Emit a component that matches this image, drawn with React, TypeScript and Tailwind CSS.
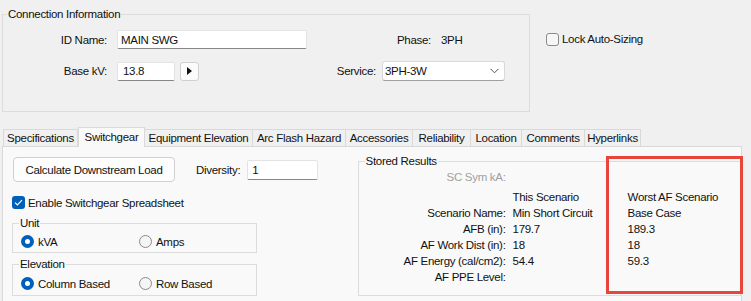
import React from "react";

function Box({
  title,
  titleBg,
  className,
  children,
}: {
  title: string;
  titleBg: string;
  className: string;
  children?: React.ReactNode;
}) {
  return (
    <div className={"border border-[#dcdcdc] " + className}>
      <div className={"-mt-[9px] w-fit px-[1px] leading-[16px] " + titleBg}>{title}</div>
      {children}
    </div>
  );
}

function Radio({ checked }: { checked?: boolean }) {
  return checked ? (
    <span className="flex h-[13px] w-[13px] shrink-0 items-center justify-center rounded-full bg-[#005fb8]">
      <span className="h-[5px] w-[5px] rounded-full bg-white" />
    </span>
  ) : (
    <span className="h-[13px] w-[13px] shrink-0 rounded-full border border-[#8a8a8a] bg-[#f5f5f5]" />
  );
}

const tabs: { name: string; w: string; active?: boolean }[] = [
  { name: "Specifications", w: "w-[75px]" },
  { name: "Switchgear", w: "w-[67px]", active: true },
  { name: "Equipment Elevation", w: "w-[108px]" },
  { name: "Arc Flash Hazard", w: "w-[93px]" },
  { name: "Accessories", w: "w-[67px]" },
  { name: "Reliability", w: "w-[58px]" },
  { name: "Location", w: "w-[51px]" },
  { name: "Comments", w: "w-[63px]" },
  { name: "Hyperlinks", w: "w-[56px]" },
];

const rows: [string, string, string][] = [
  ["Scenario Name:", "Min Short Circuit", "Base Case"],
  ["AFB (in):", "179.7", "189.3"],
  ["AF Work Dist (in):", "18", "18"],
  ["AF Energy (cal/cm2):", "54.4", "59.3"],
  ["AF PPE Level:", "", ""],
];

export default function App() {
  return (
    <div className="relative h-[301px] w-[751px] overflow-hidden bg-[#f0f0f0] font-['Liberation_Sans',Arial,sans-serif] text-[11.5px] leading-[16px] tracking-[-0.3px] text-[#111]">
      {/* Top section */}
      <div className="flex h-[127px] items-start pl-[2px] pt-[14px]">
        <Box title="Connection Information" titleBg="bg-[#f0f0f0] ml-[4px]" className="h-[98px] w-[528px]">
          <div className="mt-[8px] flex h-[19px] items-center">
            <div className="w-[104px] text-right">ID Name:</div>
            <div className="ml-[10px] flex h-[19px] w-[190px] items-center rounded-[2px] border border-[#e3e3e3] border-b-[#868686] bg-white pl-[3px]">
              MAIN SWG
            </div>
            <div className="w-[124px] text-right">Phase:</div>
            <div className="ml-[10px]">3PH</div>
          </div>
          <div className="mt-[12px] flex h-[20px] items-center">
            <div className="w-[104px] text-right">Base kV:</div>
            <div className="ml-[10px] flex h-[19px] w-[58px] items-center rounded-[2px] border border-[#e3e3e3] border-b-[#868686] bg-white pl-[5px]">
              13.8
            </div>
            <div className="ml-[5px] flex h-[19px] w-[19px] items-center justify-center rounded-[3px] border border-[#d0d0d0] bg-[#fbfbfb]">
              <svg width="5" height="8" viewBox="0 0 5 8">
                <polygon points="0,0 5,4 0,8" fill="#111" />
              </svg>
            </div>
            <div className="w-[177px] text-right">Service:</div>
            <div className="ml-[6px] flex h-[20px] w-[123px] items-center justify-between rounded-[3px] border border-[#d9d9d9] border-b-[#a0a0a0] bg-white pl-[2px] pr-[5px]">
              <span>3PH-3W</span>
              <svg width="9" height="6" viewBox="0 0 9 6">
                <path d="M0.5 0.8 L4.5 4.8 L8.5 0.8" fill="none" stroke="#555" strokeWidth="1" />
              </svg>
            </div>
          </div>
        </Box>
        <div className="ml-[16px] mt-[18px] flex items-center">
          <span className="h-[13px] w-[13px] rounded-[3px] border border-[#8a8a8a] bg-[#f6f6f6]" />
          <span className="ml-[3px] leading-[14px]">Lock Auto-Sizing</span>
        </div>
      </div>

      {/* Tab strip */}
      <div className="relative z-10 flex h-[19px] items-end pl-[3px]">
        {tabs.map((t, i) =>
          t.active ? (
            <div
              key={t.name}
              className={
                "-mb-[1px] flex h-[20px] items-center justify-center border-x border-t border-[#d9d9d9] bg-[#f9f9f9] pb-[2px] " +
                t.w
              }
            >
              {t.name}
            </div>
          ) : (
            <div
              key={t.name}
              className={
                "flex h-[17px] items-center justify-center border-t border-r border-[#d9d9d9] bg-[#f0f0f0] " +
                (i === 0 ? "border-l " : "") +
                t.w
              }
            >
              {t.name}
            </div>
          )
        )}
      </div>

      {/* Tab panel */}
      <div className="ml-[2px] flex h-[160px] w-[740px] border border-[#d9d9d9] bg-[#f9f9f9] pl-[9px] pt-[10px]">
        {/* Left column */}
        <div className="flex w-[320px] flex-col">
          <div className="flex items-center">
            <div className="ml-[1px] flex h-[25px] w-[162px] items-center justify-center rounded-[4px] border border-[#d0d0d0] bg-[#fdfdfd]">
              Calculate Downstream Load
            </div>
            <div className="ml-[21px]">Diversity:</div>
            <div className="ml-[7px] flex h-[20px] w-[71px] items-center rounded-[2px] border border-[#e3e3e3] border-b-[#868686] bg-white pl-[4px]">
              1
            </div>
          </div>
          <div className="mt-[14px] flex h-[13px] items-center">
            <span className="flex h-[13px] w-[13px] items-center justify-center rounded-[3px] bg-[#005fb8]">
              <svg width="9" height="7" viewBox="0 0 9 7">
                <path d="M1 3.6 L3.4 6 L8 1.2" fill="none" stroke="#fff" strokeWidth="1.2" />
              </svg>
            </span>
            <span className="ml-[3px]">Enable Switchgear Spreadsheet</span>
          </div>
          <Box title="Unit" titleBg="bg-[#f9f9f9] ml-[6px]" className="mt-[14px] h-[30px] w-[245px]">
            <div className="mt-[4px] flex h-[13px] items-center pl-[8px]">
              <div className="flex w-[118px] items-center">
                <Radio checked />
                <span className="ml-[4px]">kVA</span>
              </div>
              <div className="flex items-center">
                <Radio />
                <span className="ml-[4px]">Amps</span>
              </div>
            </div>
          </Box>
          <Box title="Elevation" titleBg="bg-[#f9f9f9] ml-[6px]" className="mt-[11px] h-[32px] w-[245px]">
            <div className="mt-[5px] flex h-[13px] items-center pl-[8px]">
              <div className="flex w-[118px] items-center">
                <Radio checked />
                <span className="ml-[4px]">Column Based</span>
              </div>
              <div className="flex items-center">
                <Radio />
                <span className="ml-[4px]">Row Based</span>
              </div>
            </div>
          </Box>
        </div>

        {/* Stored results */}
        <Box title="Stored Results" titleBg="bg-[#f9f9f9] ml-[6px]" className="ml-[26px] mt-[4px] h-[135px] w-[384px]">
          <div className="grid grid-cols-[147px_115px_1fr]">
            <div className="text-right text-[#a0a0a0]">SC Sym kA:</div>
            <div />
            <div />
            <div className="col-span-3 h-[4px]" />
            <div />
            <div className="pl-[7px]">This Scenario</div>
            <div className="pl-[7px]">Worst AF Scenario</div>
            {rows.map((r) => (
              <React.Fragment key={r[0]}>
                <div className="text-right">{r[0]}</div>
                <div className="pl-[7px]">{r[1]}</div>
                <div className="pl-[7px]">{r[2]}</div>
              </React.Fragment>
            ))}
          </div>
        </Box>
      </div>

      {/* Highlight overlay */}
      <div className="absolute left-[606px] top-[156px] h-[138px] w-[137px] border-[3px] border-[#e8453c]" />
    </div>
  );
}
